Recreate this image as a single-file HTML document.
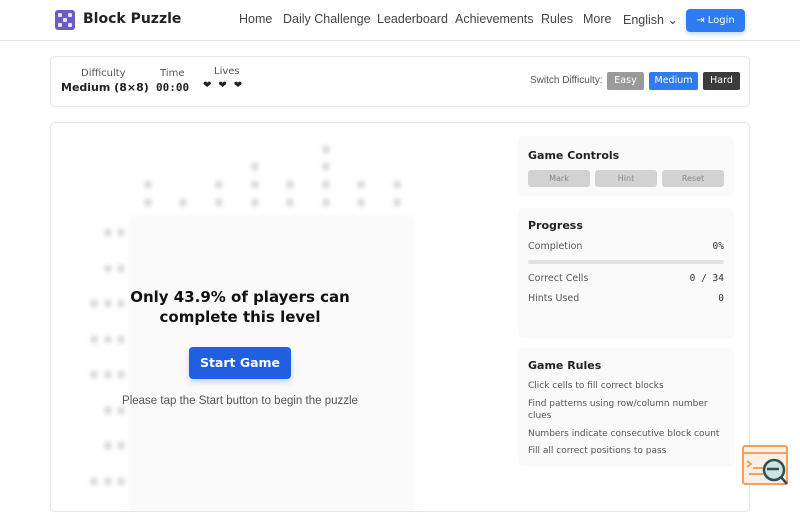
<!DOCTYPE html>
<html><head><meta charset="utf-8"><style>
*{box-sizing:border-box;margin:0;padding:0}
body{width:800px;height:500px;overflow:hidden;background:#fff;font-family:"DejaVu Sans","Liberation Sans",sans-serif;color:#222;position:relative}
.hdr{position:absolute;left:0;top:0;width:800px;height:41px;border-bottom:1px solid #e5e5e5}
.logo{position:absolute;left:55px;top:10px;width:20px;height:20px;border-radius:3px;background:#6b5bc4}
.logo i{position:absolute;width:4px;height:4px;background:#e8e4ff;border-radius:1px}
.brand{position:absolute;left:83px;top:11px;font-weight:bold;font-size:14px;color:#222}
.nav{position:absolute;top:12px;font-size:12.5px;color:#444;font-family:"Liberation Sans",sans-serif}
.login{position:absolute;left:686px;top:9px;width:59px;height:23px;background:#2f7cf0;border-radius:4px;color:#fff;font-size:10px;line-height:23px;text-align:center;box-shadow:0 2px 4px rgba(47,124,240,.3)}
.bar{position:absolute;left:50px;top:56px;width:700px;height:51px;border:1px solid #e6e6e6;border-radius:5px;box-shadow:0 1px 3px rgba(0,0,0,.04)}
.lbl{position:absolute;font-size:10px;color:#555;text-align:center}
.val{position:absolute;font-size:11px;font-weight:bold;color:#222}
.db{position:absolute;top:72px;height:18px;font-size:9.5px;line-height:18px;text-align:center;color:#fff;border-radius:2px}
.main{position:absolute;left:50px;top:122px;width:700px;height:390px;border:1px solid #e6e6e6;border-radius:5px;overflow:hidden}
.grid{position:absolute;left:0;top:0;filter:blur(2.5px)}
.d{position:absolute;width:6px;height:7px;background:#cfcfcf;border-radius:2px}
.panel{position:absolute;left:518px;width:216px;background:#fafafa;border-radius:5px}
.pt{position:absolute;left:10px;font-size:11px;font-weight:bold;color:#222}
.gb{position:absolute;top:34px;width:62px;height:17px;background:#d2d2d2;border-radius:3px;font-size:8px;color:#888;text-align:center;line-height:17px}
.row{position:absolute;left:10px;right:10px;font-size:9.5px;color:#555}
.row span{position:absolute;right:0;font-family:"DejaVu Sans Mono",monospace;color:#333}
.r{position:absolute;left:10px;font-size:9px;color:#555;width:200px;line-height:12px}
</style></head><body>
<div class="hdr">
<div class="logo"><i style="left:3px;top:3px"></i><i style="left:13px;top:3px"></i><i style="left:8px;top:8px"></i><i style="left:3px;top:13px"></i><i style="left:13px;top:13px"></i></div>
<div class="brand">Block Puzzle</div>
<div class="nav" style="left:239px">Home</div>
<div class="nav" style="left:283px">Daily Challenge</div>
<div class="nav" style="left:377px">Leaderboard</div>
<div class="nav" style="left:455px">Achievements</div>
<div class="nav" style="left:541px">Rules</div>
<div class="nav" style="left:583px">More</div>
<div class="nav" style="left:623px">English ⌄</div>
<div class="login">⇥ Login</div>
</div>
<div class="bar"></div>
<div class="lbl" style="left:81px;top:68px">Difficulty</div>
<div class="val" style="left:61px;top:81px">Medium (8×8)</div>
<div class="lbl" style="left:160px;top:68px">Time</div>
<div class="val" style="left:156px;top:81px;font-family:'DejaVu Sans Mono',monospace">00:00</div>
<div class="lbl" style="left:214px;top:66px">Lives</div>
<div class="val" style="left:203px;top:80px;font-size:10px;letter-spacing:7px">❤❤❤</div>
<div class="lbl" style="left:530px;top:75px;font-size:9px;font-family:'Liberation Sans',sans-serif;font-size:10px">Switch Difficulty:</div>
<div class="db" style="left:607px;width:37px;background:#9a9a9a">Easy</div>
<div class="db" style="left:649px;width:49px;background:#2f7cf0">Medium</div>
<div class="db" style="left:703px;width:37px;background:#3c3c3c">Hard</div>
<div class="main">
<div class="grid">
<div class="d" style="left:94px;top:58px"></div><div class="d" style="left:94px;top:76px"></div>
<div class="d" style="left:129px;top:76px"></div>
<div class="d" style="left:165px;top:58px"></div><div class="d" style="left:165px;top:76px"></div>
<div class="d" style="left:201px;top:40px"></div><div class="d" style="left:201px;top:58px"></div><div class="d" style="left:201px;top:76px"></div>
<div class="d" style="left:236px;top:58px"></div><div class="d" style="left:236px;top:76px"></div>
<div class="d" style="left:272px;top:23px"></div><div class="d" style="left:272px;top:40px"></div><div class="d" style="left:272px;top:58px"></div><div class="d" style="left:272px;top:76px"></div>
<div class="d" style="left:307px;top:58px"></div><div class="d" style="left:307px;top:76px"></div>
<div class="d" style="left:343px;top:58px"></div><div class="d" style="left:343px;top:76px"></div>
<div class="d" style="left:54px;top:106px"></div><div class="d" style="left:67px;top:106px"></div>
<div class="d" style="left:54px;top:142px"></div><div class="d" style="left:67px;top:142px"></div>
<div class="d" style="left:40px;top:177px"></div><div class="d" style="left:54px;top:177px"></div><div class="d" style="left:67px;top:177px"></div>
<div class="d" style="left:40px;top:213px"></div><div class="d" style="left:54px;top:213px"></div><div class="d" style="left:67px;top:213px"></div>
<div class="d" style="left:40px;top:248px"></div><div class="d" style="left:54px;top:248px"></div><div class="d" style="left:67px;top:248px"></div>
<div class="d" style="left:54px;top:284px"></div><div class="d" style="left:67px;top:284px"></div>
<div class="d" style="left:54px;top:319px"></div><div class="d" style="left:67px;top:319px"></div>
<div class="d" style="left:40px;top:355px"></div><div class="d" style="left:54px;top:355px"></div><div class="d" style="left:67px;top:355px"></div>
<div style="position:absolute;left:78px;top:92px;width:285px;height:300px;background:#fafafa"></div>
</div>
<div style="position:absolute;left:0;width:378px;top:164px;text-align:center;font-weight:bold;font-size:15px;line-height:20px;color:#111">Only 43.9% of players can<br>complete this level</div>
<div style="position:absolute;left:138px;top:224px;width:102px;height:32px;background:#2060e0;border-radius:4px;color:#fff;font-weight:bold;font-size:12.5px;text-align:center;line-height:32px;box-shadow:0 3px 6px rgba(32,96,224,.25)">Start Game</div>
<div style="position:absolute;left:0;width:378px;top:272px;text-align:center;font-size:10.5px;color:#555;font-family:'Liberation Sans',sans-serif;font-size:11.5px">Please tap the Start button to begin the puzzle</div>
</div>
<div class="panel" style="top:136px;height:60px"><div class="pt" style="top:13px">Game Controls</div>
<div class="gb" style="left:10px">Mark</div><div class="gb" style="left:77px">Hint</div><div class="gb" style="left:144px">Reset</div></div>
<div class="panel" style="top:208px;height:130px"><div class="pt" style="top:11px">Progress</div>
<div class="row" style="top:33px">Completion<span>0%</span></div>
<div style="position:absolute;left:10px;right:10px;top:52px;height:4px;background:#e2e2e2;border-radius:2px"></div>
<div class="row" style="top:65px">Correct Cells<span>0 / 34</span></div>
<div class="row" style="top:85px">Hints Used<span>0</span></div></div>
<div class="panel" style="top:348px;height:118px"><div class="pt" style="top:11px">Game Rules</div>
<div class="r" style="top:32px">Click cells to fill correct blocks</div>
<div class="r" style="top:50px;width:185px">Find patterns using row/column number clues</div>
<div class="r" style="top:80px;width:210px">Numbers indicate consecutive block count</div>
<div class="r" style="top:97px">Fill all correct positions to pass</div></div>
<svg style="position:absolute;left:740px;top:444px" width="52" height="46" viewBox="0 0 52 46"><rect x="3" y="2" width="44" height="38" rx="2" fill="#fbeee2" stroke="#f0a060" stroke-width="2"/><line x1="3" y1="9" x2="47" y2="9" stroke="#f0a060" stroke-width="2"/><path d="M7 17l4 3-4 3M13 24h10M9 30h14" stroke="#f0a060" stroke-width="2" fill="none"/><circle cx="34" cy="26" r="10" fill="#cfe3e3" stroke="#2f4f4f" stroke-width="2.5"/><path d="M27 25h12M41 33l6 7" stroke="#2f4f4f" stroke-width="2.5"/></svg>
</body></html>
